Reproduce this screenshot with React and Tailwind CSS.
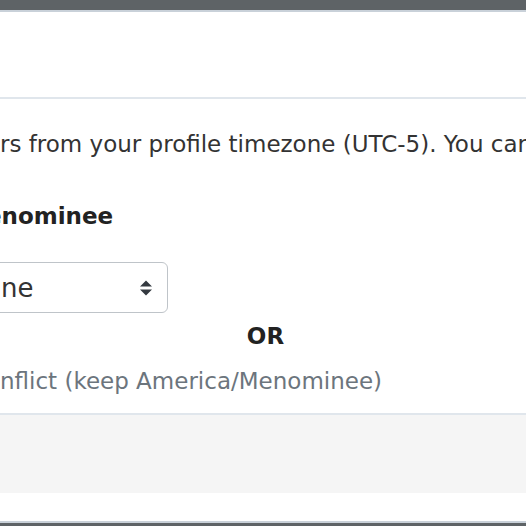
export default function App() {
  return (
    <div className="w-[526px] h-[526px] overflow-hidden bg-[#5e6366] pt-[10px] font-['DejaVu_Sans',sans-serif] text-[23px] leading-[34px]">
      {/* modal */}
      <div className="border-y-2 border-[#c9d1d9] bg-white">
        {/* header */}
        <div className="h-[87px] border-b-2 border-[#e0e6ec] bg-white" />

        {/* body */}
        <div className="h-[316px] border-b-2 border-[#e0e6ec] pt-[28px] whitespace-nowrap">
          <p className="text-[#333333]">rs from your profile timezone (UTC-5). You can</p>

          <div className="mt-[38px] ml-[-14px] font-bold text-[#222222]">enominee</div>

          <div className="mt-[29px] ml-[-20px] w-[188px] h-[51px] rounded-[6px] border border-[#bfc4c9] flex items-center justify-between pl-[20px] pr-[15px] text-[#333333]">
            <span className="text-[26px]">ne</span>
            <svg width="12" height="16" viewBox="0 0 4 5" className="fill-[#343a40]">
              <path d="M2 0L0 2h4zm0 5L0 3h4z" />
            </svg>
          </div>

          <div className="mt-[6px] flex justify-center pl-[5px] font-bold text-[#222222]">OR</div>

          <div className="mt-[11px] text-[#6c757d]">nflict (keep America/Menominee)</div>
        </div>

        {/* footer */}
        <div className="h-[78px] bg-[#f5f5f5]" />
        <div className="h-[28px] bg-white" />
      </div>
    </div>
  );
}
